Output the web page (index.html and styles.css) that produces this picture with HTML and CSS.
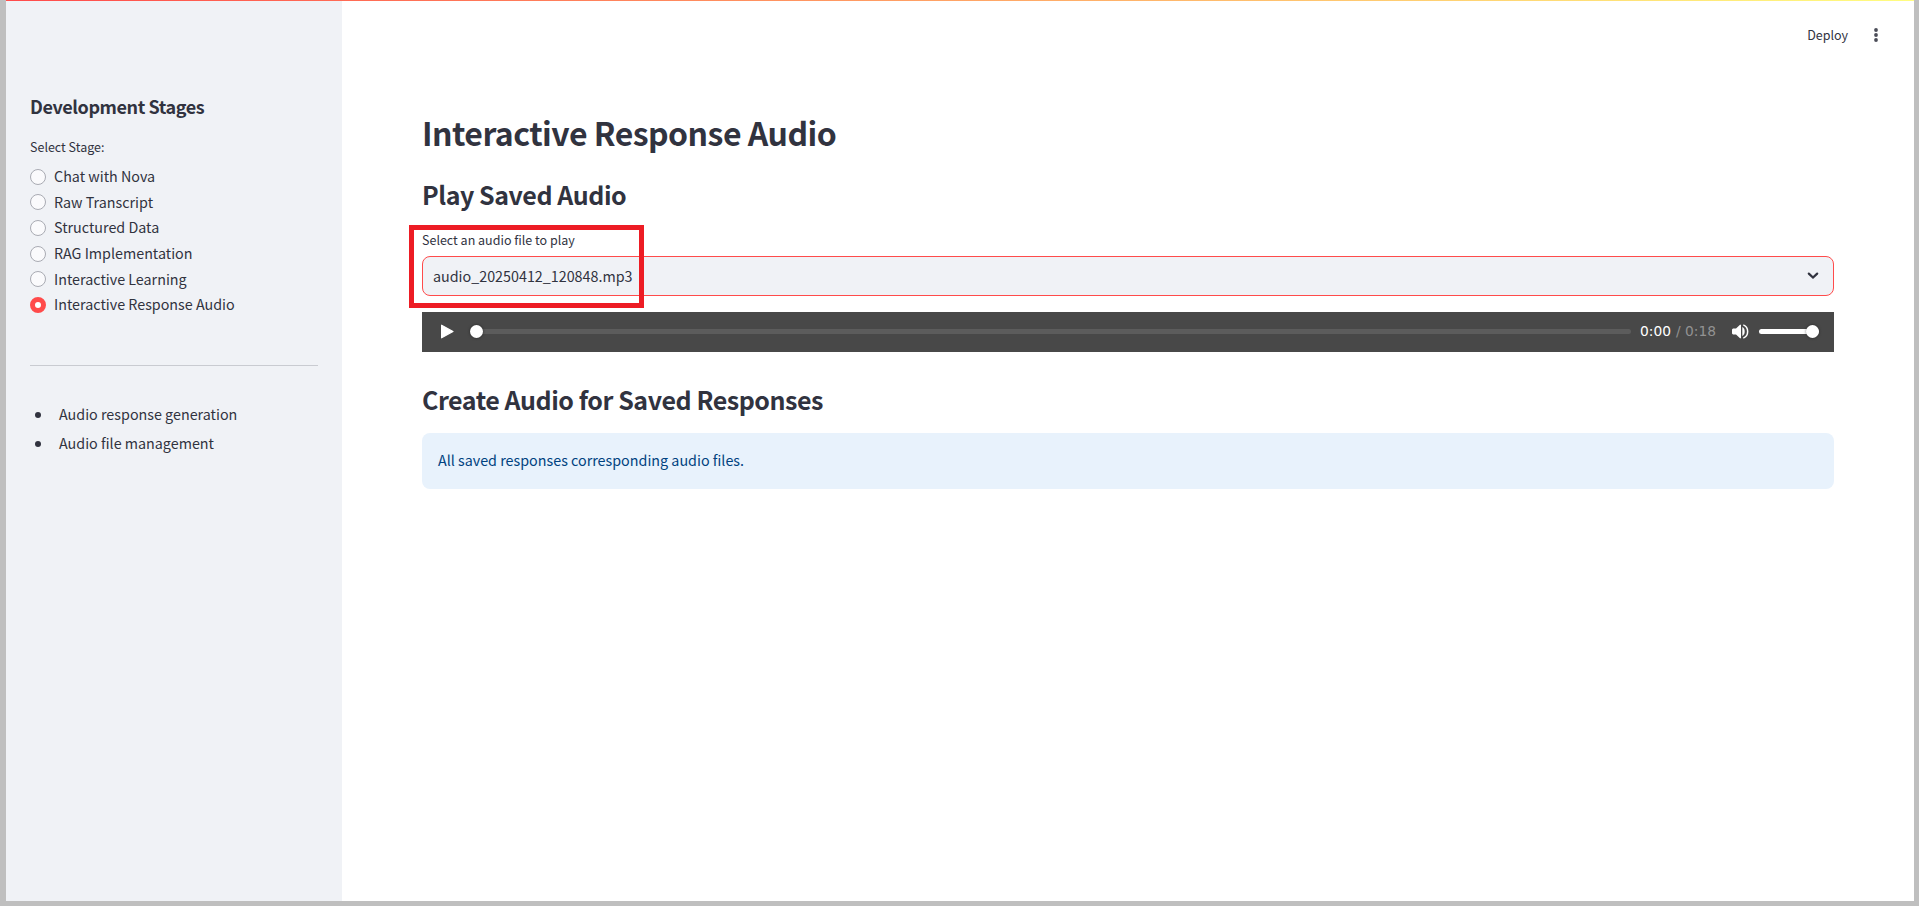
FILE: index.html
```html
<!DOCTYPE html>
<html lang="en">
<head>
<meta charset="utf-8">
<title>Interactive Response Audio</title>
<link rel="stylesheet" href="styles.css">
</head>
<body>
<div class="app">
  <div class="decoration"></div>
  <aside class="sidebar">
    <h2 class="sidebar-title">Development Stages</h2>
    <p class="label">Select Stage:</p>
    <div class="radios">
      <label class="radio"><span class="dot"></span><span class="name">Chat with Nova</span></label>
      <label class="radio"><span class="dot"></span><span class="name">Raw Transcript</span></label>
      <label class="radio"><span class="dot"></span><span class="name">Structured Data</span></label>
      <label class="radio"><span class="dot"></span><span class="name">RAG Implementation</span></label>
      <label class="radio"><span class="dot"></span><span class="name">Interactive Learning</span></label>
      <label class="radio"><span class="dot checked"></span><span class="name">Interactive Response Audio</span></label>
    </div>
    <hr class="rule">
    <ul class="notes">
      <li><span class="name">Audio response generation</span></li>
      <li><span class="name">Audio file management</span></li>
    </ul>
  </aside>
  <div class="page">
    <header class="toolbar">
      <span class="deploy">Deploy</span>
      <svg class="kebab" width="4" height="14" viewBox="0 0 4 14"><circle cx="2" cy="2" r="1.9"/><circle cx="2" cy="7" r="1.9"/><circle cx="2" cy="12" r="1.9"/></svg>
    </header>
    <main class="content">
      <h1 class="title">Interactive Response Audio</h1>
      <h2 class="heading">Play Saved Audio</h2>
      <div class="field">
        <p class="label">Select an audio file to play</p>
        <div class="select">
          <span>audio_20250412_120848.mp3</span>
          <svg width="12" height="8" viewBox="0 0 12 8"><path d="M1.8 1.6 6 5.600 10.200 1.600" fill="none" stroke="#31333f" stroke-width="2.200" stroke-linecap="round"/></svg>
        </div>
        <div class="highlight"></div>
      </div>
      <div class="player">
        <svg class="play" width="14" height="15" viewBox="0 0 14 15"><path d="M1.600 1.200v12.600L13 7.500z" fill="#fff" stroke="#fff" stroke-width="1.200" stroke-linejoin="round"/></svg>
        <div class="track"><span class="thumb"></span></div>
        <span class="time">0:00</span><span class="total">/ 0:18</span>
        <svg class="speaker" width="17" height="15" viewBox="0 0 17 15"><path d="M0 5.500 1 4.500H4L8 .7h1v13.600H8L4 10.500H1L0 9.500Z" fill="#fff"/><path d="M10.300 3c3.200 1.500 3.200 7.500 0 9z" fill="#fff"/><path d="M11.300.9c5.800 2.300 5.800 10.900 0 13.200" fill="none" stroke="#fff" stroke-width="1.500"/></svg>
        <div class="volume"><span class="thumb"></span></div>
      </div>
      <h2 class="heading second">Create Audio for Saved Responses</h2>
      <div class="alert"><span class="name">All saved responses corresponding audio files.</span></div>
    </main>
  </div>
</div>
</body>
</html>
```
FILE: styles.css
```css
* { box-sizing: border-box; }
body {
  margin: 0;
  color: #31333f;
  font-family: "Noto Sans CJK SC", "Noto Sans CJK JP", sans-serif;
  font-size: 14.32px;
  line-height: 26px;
}
h1, h2, p, ul { margin: 0; padding: 0; }
svg { display: block; flex: none; }
.app {
  position: relative;
  display: flex;
  height: 906px;
  overflow: hidden;
  border: solid #bfbfbf;
  border-width: 0 5px 5px 6px;
  background: #fff;
}
.decoration {
  position: absolute;
  inset: 0 0 auto;
  height: 1px;
  background: linear-gradient(90deg, #ff4b4b, #fffd80);
}
.sidebar {
  flex: none;
  width: 336px;
  padding: 91px 24px 0;
  background: #f0f2f6;
}
.sidebar-title { font-size: 18px; font-weight: 600; line-height: 30px; letter-spacing: -.41px; }
.label { font-size: 12.5px; line-height: 20px; }
.sidebar .label { margin-top: 16px; }
.radios { margin-top: 7px; }
.radio { display: flex; align-items: center; gap: 8px; height: 25.6px; }
.name { margin-bottom: 2px; }
.radio .name { margin-bottom: 1.1px; }
.dot {
  flex: none;
  width: 16px;
  height: 16px;
  border: 1px solid #a9abb3;
  border-radius: 50%;
  background: #fafafc;
}
.dot.checked { border: 5px solid #ff4b4b; background: #fff; }
.rule { height: 1px; margin: 47px 0 0; border: 0; background: #c9cbd1; }
.notes { margin-top: 35px; padding-left: 29px; list-style: none; }
.notes li { display: flex; align-items: center; height: 29px; }
.notes li::before {
  width: 6px;
  height: 6px;
  margin: 0 18px 0 -24px;
  border-radius: 50%;
  background: #31333f;
  content: "";
}
.page { flex: 1; min-width: 0; }
.toolbar {
  display: flex;
  align-items: center;
  justify-content: flex-end;
  gap: 26px;
  height: 70px;
  padding-right: 36px;
}
.deploy { font-size: 12.5px; }
.kebab { fill: #4b4d58; }
.content { padding: 38px 80px 0; }
.title { font-size: 32px; font-weight: 600; line-height: 48px; letter-spacing: -.53px; }
.heading { margin-top: 20px; font-size: 25px; font-weight: 600; line-height: 36px; letter-spacing: -.45px; }
.field { position: relative; margin-top: 18px; }
.select {
  display: flex;
  align-items: center;
  justify-content: space-between;
  height: 40px;
  margin-top: 6px;
  padding: 0 14px 0 10px;
  border: 1px solid #ff4b4b;
  border-radius: 8px;
  background: #f0f2f6;
}
.highlight {
  position: absolute;
  top: -5px;
  left: -13px;
  width: 235px;
  height: 83px;
  border: 5px solid #ed1c24;
}
.player {
  display: flex;
  align-items: center;
  height: 40px;
  margin-top: 16px;
  padding: 0 15px 1px 18px;
  background: #484848;
}
.track { position: relative; flex: 1; height: 5px; margin-left: 16px; border-radius: 3px; background: #5c5c5c; }
.thumb {
  position: absolute;
  top: -4px;
  width: 13px;
  height: 13px;
  border-radius: 50%;
  background: #fff;
  box-shadow: 0 0 3px rgba(0, 0, 0, .5);
}
.track .thumb { left: 0; }
.time, .total { margin-bottom: 1px; font: 13.8px/20px "DejaVu Sans", sans-serif; white-space: pre; }
.time { margin-left: 9px; color: #fff; }
.total { margin-left: 5px; color: #929292; }
.speaker { margin-left: 16px; }
.volume { position: relative; width: 60px; height: 5px; margin-left: 10px; border-radius: 3px; background: #fff; }
.volume .thumb { right: 0; }
.second { margin-top: 29px; }
.alert {
  display: flex;
  align-items: center;
  height: 56px;
  margin-top: 16px;
  padding: 0 16px;
  border-radius: 8px;
  background: #e8f2fc;
  color: #004280;
}
```
